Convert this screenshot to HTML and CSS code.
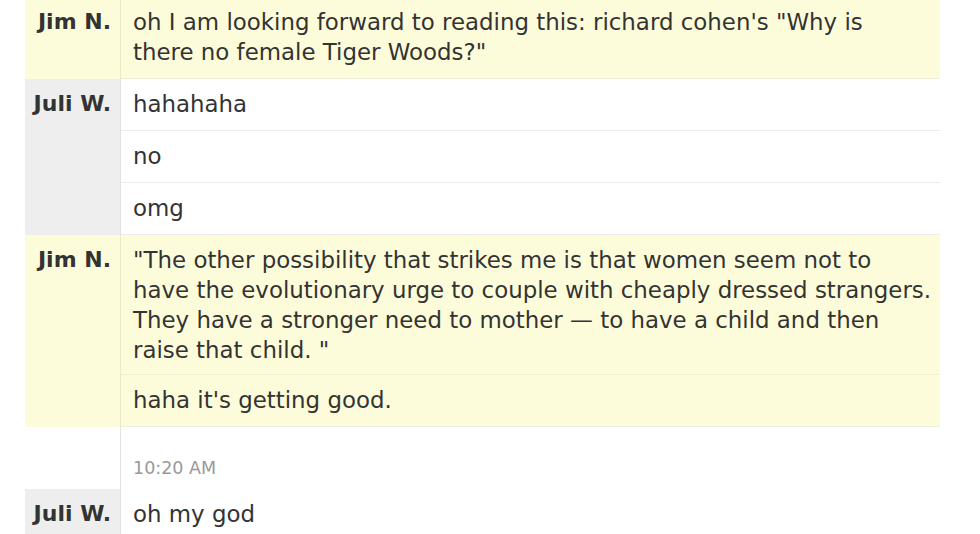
FILE: index.html
```html
<!DOCTYPE html>
<html>
<head>
<meta charset="utf-8">
<link rel="stylesheet" href="styles.css">
</head>
<body>
<div class="log">
  <div class="group jim">
    <div class="name">Jim N.</div>
    <div class="msgs">
      <div class="msg">oh I am looking forward to reading this: richard cohen's "Why is<br>there no female Tiger Woods?"</div>
    </div>
  </div>
  <div class="group juli">
    <div class="name">Juli W.</div>
    <div class="msgs">
      <div class="msg">hahahaha</div>
      <div class="msg">no</div>
      <div class="msg">omg</div>
    </div>
  </div>
  <div class="group jim">
    <div class="name">Jim N.</div>
    <div class="msgs">
      <div class="msg tight">"The other possibility that strikes me is that women seem not to<br>have the evolutionary urge to couple with cheaply dressed strangers.<br>They have a stronger need to mother — to have a child and then<br>raise that child. "</div>
      <div class="msg">haha it's getting good.</div>
    </div>
  </div>
  <div class="group stamp">
    <div class="name"></div>
    <div class="msgs">
      <div class="time">10:20 AM</div>
    </div>
  </div>
  <div class="group juli last">
    <div class="name">Juli W.</div>
    <div class="msgs">
      <div class="msg">oh my god</div>
    </div>
  </div>
</div>
</body>
</html>
```
FILE: styles.css
```css
html, body {
  margin: 0;
  padding: 0;
  background: #ffffff;
}
body {
  font-family: "DejaVu Sans", Verdana, sans-serif;
  color: #333333;
  overflow: hidden;
}
.log {
  margin: -3px 0 0 25px;
  width: 915px;
}
.group {
  display: grid;
  grid-template-columns: 95px 1fr;
}
.name {
  font-weight: bold;
  font-size: 22px;
  line-height: 30px;
  text-align: right;
  padding: 10px 9px 0 0;
  color: #333;
}
.msgs {
  border-left: 1px solid #e2e2e2;
  min-width: 0;
}
.msg {
  font-size: 22.9px;
  line-height: 30px;
  padding: 10px 0 11px 12px;
  border-bottom: 1px solid #ebebeb;
  white-space: nowrap;
}
.msg.tight {
  padding-bottom: 9px;
}
.jim {
  background: #fdfcda;
}
.jim .msgs {
  border-left-color: #ebe9cc;
}
.jim .msg {
  border-bottom-color: #f1efcd;
}
.jim .msg:last-child {
  border-bottom-color: #efeede;
}
.juli .name {
  background: #eeeeee;
}
.juli .msgs {
  background: #ffffff;
}
.stamp .msgs {
  height: 62px;
  display: flex;
  align-items: flex-end;
}
.time {
  font-size: 17.5px;
  line-height: 20px;
  color: #999999;
  padding: 0 0 11px 12px;
}
.last .msg {
  border-bottom: none;
}
```
